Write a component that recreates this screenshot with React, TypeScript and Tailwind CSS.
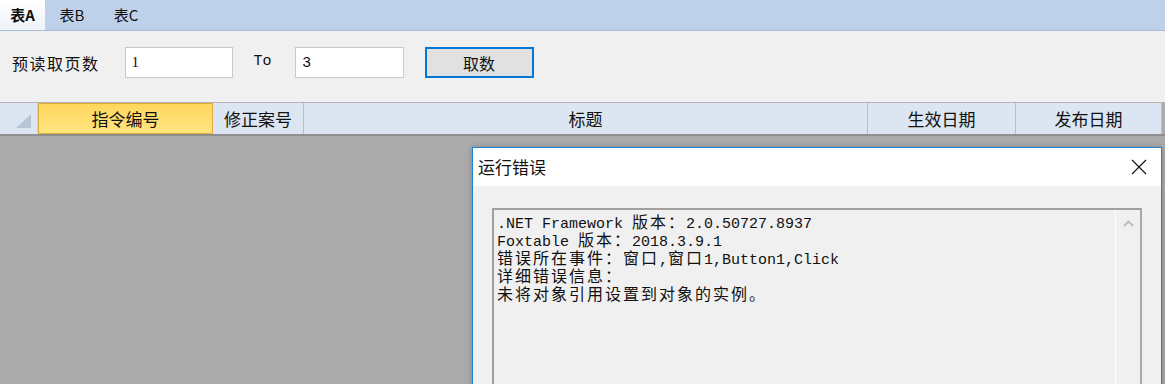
import React from "react";

const CJK = "\"Noto Sans CJK SC\", sans-serif";

// splits a line into half-width and full-width runs so the box keeps a 9px / 18px grid
function MonoLine({ text }: { text: string }) {
  const runs = text.match(/[\u3000-\u9fff\uff00-\uffef]+|[^\u3000-\u9fff\uff00-\uffef]+/g) ?? [];
  return (
    <div className="h-[18px] whitespace-pre leading-[18px]">
      {runs.map((r, i) =>
        /[\u3000-\u9fff\uff00-\uffef]/.test(r) ? (
          <span
            key={i}
            className="text-[16px] leading-[18px] tracking-[2px] font-['Noto_Sans_CJK_SC',sans-serif]"
          >
            {r}
          </span>
        ) : (
          <span key={i} className="text-[15px] leading-[18px] font-['Liberation_Mono',monospace]">
            {r}
          </span>
        )
      )}
    </div>
  );
}

const columns = [
  { label: "修正案号", w: "w-[91px]" },
  { label: "标题", w: "w-[564px]" },
  { label: "生效日期", w: "w-[148px]" },
  { label: "发布日期", w: "w-[146px]" },
];

const lines = [
  ".NET Framework 版本：2.0.50727.8937",
  "Foxtable 版本：2018.3.9.1",
  "错误所在事件：窗口,窗口1,Button1,Click",
  "详细错误信息：",
  "未将对象引用设置到对象的实例。",
];

export default function App() {
  return (
    <div
      className="relative flex h-[384px] w-[1165px] flex-col overflow-hidden bg-[#ababab] text-[#111]"
      style={{ fontFamily: CJK }}
    >
      {/* tab strip */}
      <div className="flex h-[31px] shrink-0 items-stretch border-b border-[#a9bcd6] bg-[#bfd1ea] text-[15px]">
        <div className="flex w-[45px] items-center justify-center bg-gradient-to-b from-[#ffffff] to-[#eef3fa] font-bold">
          表A
        </div>
        <div className="flex w-[54px] items-center justify-center">表B</div>
        <div className="flex w-[54px] items-center justify-center">表C</div>
      </div>

      {/* toolbar */}
      <div className="flex h-[71px] shrink-0 items-center bg-[#f0f0f0] pb-[8px] pl-[12px]">
        <span className="text-[16px] tracking-[1.5px]">预读取页数</span>
        <div className="ml-[25px] flex h-[31px] w-[108px] items-center border border-[#c8c8c8] bg-white pl-[6px] text-[15px] font-['Liberation_Serif',serif]">
          1
        </div>
        <span className="ml-[21px] w-[41px] text-[15px] font-['Liberation_Mono',monospace]">To</span>
        <div className="flex h-[31px] w-[109px] items-center border border-[#c8c8c8] bg-white pl-[7px] text-[15px] font-['Liberation_Sans',sans-serif]">
          3
        </div>
        <button className="ml-[21px] flex h-[31px] w-[109px] items-center justify-center border-2 border-[#0078d7] bg-[#e1e1e1] text-[16px]">
          取数
        </button>
      </div>

      {/* grid header */}
      <div className="flex h-[34px] shrink-0 border-t border-[#b4b4b4] border-b-2 border-b-[#8f8f8f] bg-[#dce6f2] text-[17px]">
        <div className="relative w-[38px] border-r border-[#c5d2e2]">
          <svg className="absolute left-[16px] top-[11px]" width="15" height="14" viewBox="0 0 15 14">
            <polygon points="15,0 15,14 0,14" fill="#b7c5d7" />
          </svg>
        </div>
        <div className="flex w-[175px] items-center justify-center border border-[#e0a93e] bg-gradient-to-b from-[#ffd65c] to-[#ffe57f]">
          指令编号
        </div>
        {columns.map((c) => (
          <div
            key={c.label}
            className={`${c.w} flex items-center justify-center border-r border-[#b0bfd2]`}
          >
            {c.label}
          </div>
        ))}
        <div className="flex-1 bg-[#ababab]" />
      </div>

      {/* error dialog window */}
      <div className="absolute left-[472px] top-[147px] flex h-[260px] w-[690px] flex-col border border-[#1883d7] bg-[#f0f0f0] shadow-[0_0_6px_rgba(0,0,0,0.25)]">
        <div className="flex h-[38px] shrink-0 items-center justify-between bg-white pl-[5px] pr-[14px]">
          <span className="text-[17px]">运行错误</span>
          <svg width="16" height="16" viewBox="0 0 16 16">
            <path d="M1 1L15 15M15 1L1 15" stroke="#111" strokeWidth="1.1" />
          </svg>
        </div>
        <div className="pl-[19px] pr-[19px] pt-[22px]">
          <div className="flex h-[200px] border-2 border-[#a0a0a0] border-b-0 border-r-[#a8a8a8] bg-[#f0f0f0]">
            <div className="flex-1 pl-[3px] pt-[2px]">
              {lines.map((l) => (
                <MonoLine key={l} text={l} />
              ))}
            </div>
            <div className="flex w-[25px] justify-center border-l border-white pt-[10px]">
              <svg width="11" height="7" viewBox="0 0 11 7">
                <path d="M1 6L5.5 1.5L10 6" stroke="#bdbdbd" strokeWidth="2" fill="none" />
              </svg>
            </div>
          </div>
        </div>
      </div>
    </div>
  );
}
